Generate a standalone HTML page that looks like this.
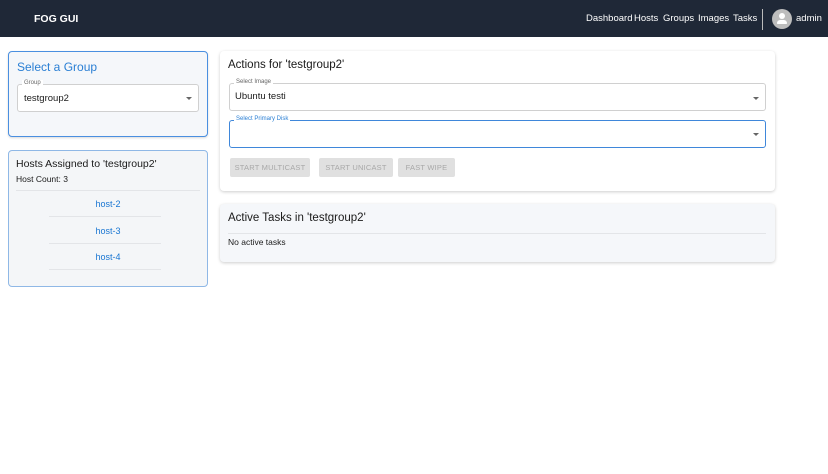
<!DOCTYPE html><html><head><style>
*{box-sizing:border-box;margin:0;padding:0}
body{width:828px;height:474px;background:#fff;font-family:"Liberation Sans",sans-serif;position:relative;overflow:hidden;color:#1a1a1a}
.a{position:absolute}
.hdr{left:0;top:0;width:828px;height:37px;background:#1f2837}
.nav{top:13px;font-size:9.5px;color:#fff}
.card{border-radius:4px}
.lbl{font-size:6px;color:#666;background:#fff;padding:0 2px}
.btn{top:158px;height:19px;background:#e0e0e0;color:#a8a8a8;font-size:7.5px;text-align:center;line-height:19px;border-radius:2px;letter-spacing:.2px}
.arr{width:0;height:0;border-left:3px solid transparent;border-right:3px solid transparent;border-top:3px solid #666}
.hl{font-size:9px;color:#1976d2;left:8px;width:200px;text-align:center}
.dv{height:1px;background:#e3e5e8}
</style></head><body>
<div class="a hdr"></div>
<div class="a" style="left:34px;top:13px;color:#fff;font-weight:bold;font-size:10.5px">FOG GUI</div>
<div class="a nav" style="left:586px">Dashboard</div>
<div class="a nav" style="left:634px">Hosts</div>
<div class="a nav" style="left:663px">Groups</div>
<div class="a nav" style="left:698px">Images</div>
<div class="a nav" style="left:733px">Tasks</div>
<div class="a" style="left:762px;top:9px;width:1px;height:21px;background:#bbb"></div>
<div class="a" style="left:772px;top:9px;width:20px;height:20px;border-radius:50%;background:#bdbdbd"></div>
<div class="a" style="left:779px;top:13px;width:6px;height:6px;border-radius:50%;background:#fff"></div>
<div class="a" style="left:777px;top:20px;width:10px;height:4px;border-radius:4px 4px 1px 1px;background:#fff"></div>
<div class="a nav" style="left:796px">admin</div>

<div class="a card" style="left:8px;top:51px;width:200px;height:86px;border:1.5px solid #4a8fe0;background:#f5f7fa;box-shadow:0 1px 2px rgba(0,0,0,.15)"></div>
<div class="a" style="left:17px;top:60px;font-size:12px;color:#2a7fd4">Select a Group</div>
<div class="a" style="left:17px;top:84px;width:182px;height:28px;border:1px solid #d0d0d0;border-radius:3px;background:#fff"></div>
<div class="a lbl" style="left:22px;top:80px;background:#fff">Group</div>
<div class="a" style="left:24px;top:93px;font-size:9.5px">testgroup2</div>
<div class="a arr" style="left:186px;top:97px"></div>

<div class="a card" style="left:8px;top:150px;width:200px;height:137px;border:1.5px solid #8fb8e6;background:#f4f6f8"></div>
<div class="a" style="left:16px;top:158px;font-size:10.5px">Hosts Assigned to 'testgroup2'</div>
<div class="a" style="left:16px;top:174px;font-size:8.5px">Host Count: 3</div>
<div class="a dv" style="left:16px;top:190px;width:184px"></div>
<div class="a hl" style="top:199px">host-2</div>
<div class="a dv" style="left:49px;top:216px;width:112px"></div>
<div class="a hl" style="top:226px">host-3</div>
<div class="a dv" style="left:49px;top:243px;width:112px"></div>
<div class="a hl" style="top:252px">host-4</div>
<div class="a dv" style="left:49px;top:269px;width:112px"></div>

<div class="a card" style="left:220px;top:51px;width:555px;height:140px;background:#fff;box-shadow:0 1px 3px rgba(0,0,0,.2)"></div>
<div class="a" style="left:228px;top:59px;font-size:11.5px">Actions for 'testgroup2'</div>
<div class="a" style="left:229px;top:83px;width:537px;height:28px;border:1px solid #d0d0d0;border-radius:3px"></div>
<div class="a lbl" style="left:234px;top:79px">Select Image</div>
<div class="a" style="left:235px;top:91px;font-size:9.5px">Ubuntu testi</div>
<div class="a arr" style="left:753px;top:97px"></div>
<div class="a" style="left:229px;top:120px;width:537px;height:28px;border:1.5px solid #3f87da;border-radius:3px"></div>
<div class="a lbl" style="left:234px;top:116px;color:#2a7fd4">Select Primary Disk</div>
<div class="a arr" style="left:753px;top:133px"></div>
<div class="a btn" style="left:230px;width:80px">START MULTICAST</div>
<div class="a btn" style="left:319px;width:74px">START UNICAST</div>
<div class="a btn" style="left:398px;width:57px">FAST WIPE</div>

<div class="a card" style="left:220px;top:204px;width:555px;height:58px;background:#f5f7fa;box-shadow:0 1px 3px rgba(0,0,0,.2)"></div>
<div class="a" style="left:228px;top:212px;font-size:11.5px">Active Tasks in 'testgroup2'</div>
<div class="a dv" style="left:228px;top:233px;width:538px"></div>
<div class="a" style="left:228px;top:237px;font-size:8.5px">No active tasks</div>
</body></html>
